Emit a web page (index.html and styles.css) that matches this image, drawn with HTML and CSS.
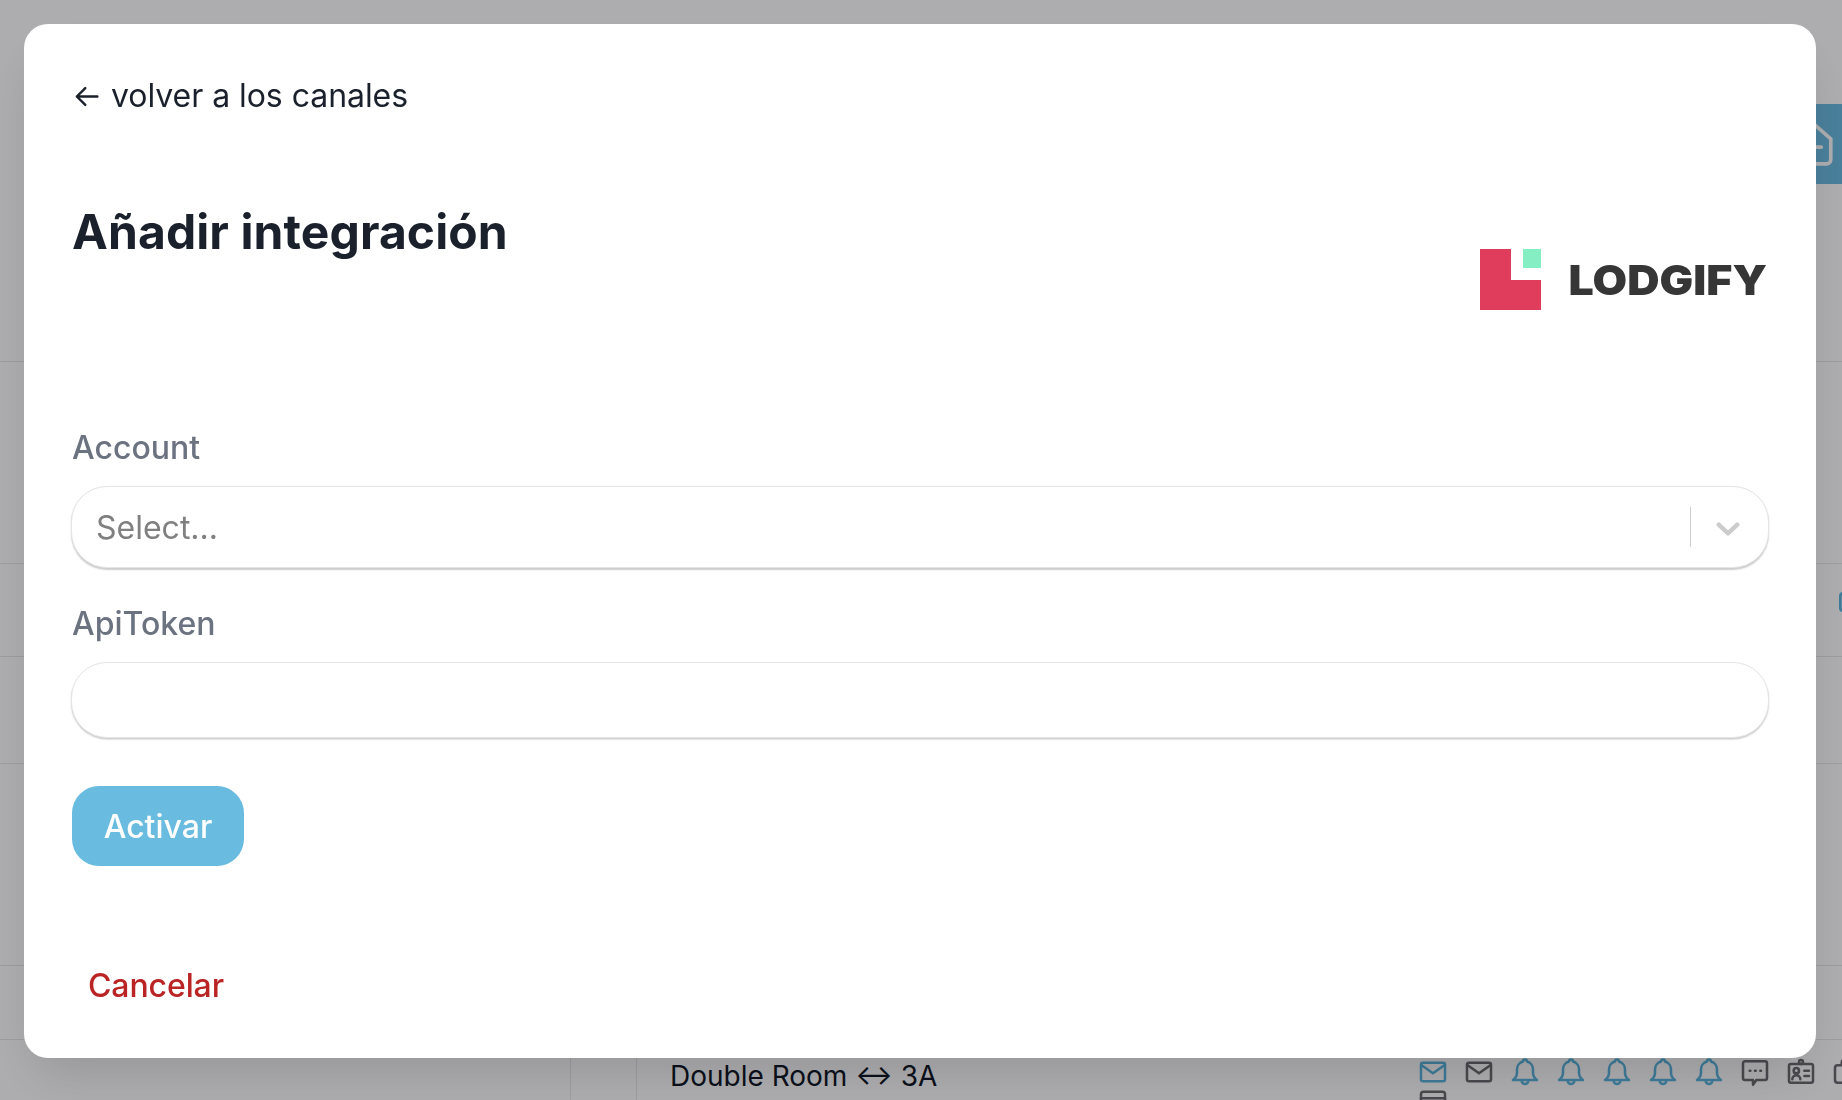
FILE: index.html
```html
<!DOCTYPE html>
<html lang="es">
<head>
<meta charset="utf-8">
<title>Añadir integración</title>
<link rel="stylesheet" href="styles.css">
</head>
<body>
<div class="page">
  <div class="row row-top">
    <div class="tab">
      <svg class="tab-icon" viewBox="0 0 38 42" fill="none" stroke="currentColor" stroke-width="3.5" stroke-linejoin="round" stroke-linecap="round">
        <path d="M19 2 35 16V36a4 4 0 0 1-4 4H7a4 4 0 0 1-4-4V16Z"/>
        <path d="M19 17V31M12 24H26"/>
      </svg>
    </div>
  </div>
  <div class="row row-a"></div>
  <div class="row row-b">
    <svg class="edge-icon" viewBox="0 0 24 24" fill="none" stroke="currentColor" stroke-width="2" stroke-linejoin="round"><path d="M4 9a2 2 0 0 1 2-2h2V5a2 2 0 0 1 2-2h4a2 2 0 0 1 2 2v2h2a2 2 0 0 1 2 2v9a2 2 0 0 1-2 2H6a2 2 0 0 1-2-2Z"/></svg>
  </div>
  <div class="row row-c"></div>
  <div class="row row-a"></div>
  <div class="row row-d"></div>
  <div class="row-last">
    <div class="cell cell-one"></div>
    <div class="cell cell-two"></div>
    <div class="cell cell-name">Double Room ↔ 3A</div>
    <div class="icons">
      <svg class="ic blue" viewBox="0 0 24 24"><rect x="3" y="5" width="18" height="14" rx="1.5"/><path d="M3.5 7 12 13l8.500-6"/></svg>
      <svg class="ic gray" viewBox="0 0 24 24"><rect x="3" y="5" width="18" height="14" rx="1.5"/><path d="M3.500 7 12 13l8.500-6"/></svg>
      <svg class="ic blue" viewBox="0 0 24 24"><path d="M3 18h18c-2-1.500-3-3-3-5.500V10a6 6 0 0 0-4.500-5.800 1.500 1.500 0 0 0-3 0A6 6 0 0 0 6 10v2.500C6 15 5 16.500 3 18Z"/><path d="M9.500 18.500a2.500 2.500 0 0 0 5 0"/></svg>
      <svg class="ic blue" viewBox="0 0 24 24"><path d="M3 18h18c-2-1.500-3-3-3-5.500V10a6 6 0 0 0-4.500-5.800 1.500 1.500 0 0 0-3 0A6 6 0 0 0 6 10v2.500C6 15 5 16.500 3 18Z"/><path d="M9.500 18.500a2.500 2.500 0 0 0 5 0"/></svg>
      <svg class="ic blue" viewBox="0 0 24 24"><path d="M3 18h18c-2-1.500-3-3-3-5.500V10a6 6 0 0 0-4.500-5.800 1.500 1.500 0 0 0-3 0A6 6 0 0 0 6 10v2.500C6 15 5 16.500 3 18Z"/><path d="M9.500 18.500a2.500 2.500 0 0 0 5 0"/></svg>
      <svg class="ic blue" viewBox="0 0 24 24"><path d="M3 18h18c-2-1.500-3-3-3-5.500V10a6 6 0 0 0-4.500-5.800 1.500 1.500 0 0 0-3 0A6 6 0 0 0 6 10v2.500C6 15 5 16.500 3 18Z"/><path d="M9.500 18.500a2.500 2.500 0 0 0 5 0"/></svg>
      <svg class="ic blue" viewBox="0 0 24 24"><path d="M3 18h18c-2-1.500-3-3-3-5.500V10a6 6 0 0 0-4.500-5.800 1.500 1.500 0 0 0-3 0A6 6 0 0 0 6 10v2.500C6 15 5 16.500 3 18Z"/><path d="M9.500 18.500a2.500 2.500 0 0 0 5 0"/></svg>
      <svg class="ic gray" viewBox="0 0 24 24"><path d="M4.500 4h15A1.500 1.500 0 0 1 21 5.500v11a1.500 1.500 0 0 1-1.500 1.500H13l-2.500 3.500V18h-6A1.500 1.500 0 0 1 3 16.500v-11A1.500 1.500 0 0 1 4.500 4Z"/><path d="M8 11h.5M12 11h.5M16 11h.5"/></svg>
      <svg class="ic gray" viewBox="0 0 24 24"><rect x="3" y="6" width="18" height="14" rx="1.500"/><circle cx="12" cy="4.500" r="1.500"/><circle cx="8.500" cy="11" r="2"/><path d="M5.500 17.500c0-2 1.500-3 3-3s3 1 3 3M14.500 11H18M14.500 15H18"/></svg>
      <svg class="ic gray" viewBox="0 0 24 24"><path d="M3 9a2 2 0 0 1 2-2h3V5a2 2 0 0 1 2-2h4a2 2 0 0 1 2 2v2h3a2 2 0 0 1 2 2v9a2 2 0 0 1-2 2H5a2 2 0 0 1-2-2Z"/></svg>
      <svg class="ic gray" viewBox="0 0 24 24"><rect x="3" y="5" width="18" height="14" rx="2"/><path d="M3 10h18"/></svg>
    </div>
  </div>
</div>

<div class="backdrop"></div>

<section class="modal">
  <a class="back" href="#">
    <svg class="back-arrow" viewBox="0 0 24 24" fill="none" stroke="currentColor" stroke-width="2" stroke-linecap="round" stroke-linejoin="round"><path d="M11 5 4 12l7 7M4 12h17"/></svg>
    <span>volver a los canales</span>
  </a>
  <header class="head">
    <h1 class="title">Añadir integración</h1>
    <div class="logo">
      <svg class="logo-mark" viewBox="0 0 61 61"><path class="logo-red" d="M0 0H31V31H61V61H0Z"/><rect class="logo-green" x="43" y="0" width="18" height="19"/></svg>
      <span class="logo-text">LODGIFY</span>
    </div>
  </header>
  <label class="label label-account">Account</label>
  <div class="field field-select">
    <span class="placeholder">Select...</span>
    <span class="sep"></span>
    <svg class="chevron" viewBox="0 0 22 14" fill="none" stroke="currentColor" stroke-width="4" stroke-linecap="round" stroke-linejoin="round"><path d="M2.500 3 11 11l8.500-8"/></svg>
  </div>
  <label class="label label-token">ApiToken</label>
  <div class="field field-input"></div>
  <button class="activate" type="button">Activar</button>
  <a class="cancel" href="#">Cancelar</a>
</section>
</body>
</html>
```
FILE: styles.css
```css
* { box-sizing: border-box; }
html, body { margin: 0; padding: 0; height: 100%; overflow: hidden; }
body { font-family: "Inter", "Liberation Sans", sans-serif; background: #fff; color: #111827; }

.page { height: 1100px; overflow: hidden; display: flex; flex-direction: column; }
.row { border-bottom: 1.5px solid #e5e7eb; flex: none; display: flex; justify-content: flex-end; }
.row-top { height: 362px; padding-top: 104px; align-items: flex-start; }
.row-a { height: 202px; }
.row-b { height: 93px; align-items: flex-start; padding-top: 20px; }
.row-c { height: 107px; }
.row-d { height: 74px; }
.tab { width: 80px; height: 80px; background: #6dbce1; color: #fff; display: flex; align-items: center; justify-content: center; }
.tab-icon { width: 40px; height: 44px; flex: none; position: relative; left: 12px; }
.edge-icon { width: 32px; height: 32px; color: #5bb5dd; margin-right: -25px; flex: none; }

.row-last { flex: 1; display: flex; min-height: 0; }
.cell { height: 100%; flex: none; }
.cell-one { width: 571px; border-right: 1.5px solid #e5e7eb; }
.cell-two { width: 66px; border-right: 1.5px solid #e5e7eb; }
.cell-name { flex: 1; padding: 18px 0 0 33px; font-size: 28px; line-height: 36px; white-space: nowrap; }
.icons { width: 425px; flex: none; display: grid; grid-template-columns: repeat(10, 32px); grid-auto-rows: 29px; column-gap: 14px; align-content: start; padding-top: 16px; }
.ic { width: 32px; height: 32px; fill: none; stroke-width: 1.9; stroke-linecap: round; stroke-linejoin: round; }
.blue { stroke: #5bb5dd; }
.gray { stroke: #6b6b70; }

.backdrop { position: fixed; inset: 0; background: rgba(0, 0, 8, 0.32); }

.modal { position: fixed; left: 24px; top: 24px; width: 1792px; height: 1034px; background: #fff; border-radius: 24px; padding: 51px 47px 0 48px; box-shadow: 0 25px 50px -12px rgba(0, 0, 0, 0.15); display: flex; flex-direction: column; align-items: flex-start; }

.back { display: flex; align-items: center; gap: 10px; font-size: 32px; line-height: 42px; color: #1a202c; text-decoration: none; letter-spacing: -0.05px; }
.back-arrow { width: 29px; height: 29px; flex: none; }

.head { width: 100%; display: flex; justify-content: space-between; align-items: flex-start; margin-top: 88px; height: 225px; }
.title { margin: 0; font-size: 48px; line-height: 54px; font-weight: 700; color: #1a202c; letter-spacing: 0.1px; }
.logo { display: flex; align-items: center; gap: 44px; margin-top: 44px; margin-right: 2px; }
.logo-mark { width: 61px; height: 61px; flex: none; }
.logo-red { fill: #e03c5b; }
.logo-green { fill: #85efc3; }
.logo-text { font-size: 41px; line-height: 46px; font-weight: 900; color: #363636; transform: scaleX(1.09); transform-origin: right center; }

.label { display: block; font-size: 32px; line-height: 36px; font-weight: 500; color: #6b7280; }
.field { width: 1698px; margin-left: -1px; background: #fff; border: 1.5px solid #e5e5e5; box-shadow: 0 1.5px 1.5px rgba(0, 0, 0, 0.2); }
.field-select { height: 82px; border-radius: 36px; margin-top: 20px; display: flex; align-items: center; padding-left: 24px; }
.field-input { height: 76px; border-radius: 36px; margin-top: 20px; }
.label-token { margin-top: 38px; }
.placeholder { flex: 1; font-size: 32px; color: #808080; }
.sep { width: 1.5px; height: 40px; background: #ccc; flex: none; }
.chevron { width: 24px; height: 16px; color: #ccc; margin: 3px 28px 0 25px; flex: none; }

.activate { margin: 48px 0 0; width: 172px; height: 80px; border: 0; border-radius: 27px; background: #69bbdf; color: #fff; font: 500 32px "Inter", "Liberation Sans", sans-serif; padding: 0; }
.cancel { margin: 100px 0 0 16px; font-size: 32px; line-height: 40px; font-weight: 500; color: #bb2424; text-decoration: none; letter-spacing: -0.1px; }
```
